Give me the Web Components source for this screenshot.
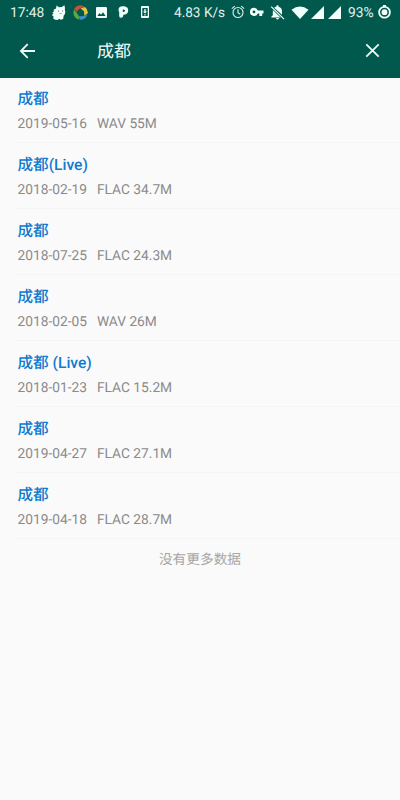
<!DOCTYPE html>
<html lang="zh-CN">
<head>
<meta charset="UTF-8">
<meta name="viewport" content="width=device-width, initial-scale=1">
<title>成都</title>
<style>
    body {
        margin: 0;
        background: #fafafa;
        font-family: Roboto, "Noto Sans CJK SC", sans-serif;
        text-rendering: geometricPrecision;
    }
</style>
</head>
<body>
<music-app></music-app>

<template id="status-bar-template">
    <style>
        :host {
            display: flex;
            align-items: center;
            justify-content: space-between;
            height: 24px;
            padding: 0 9px 0 10px;
            color: #e4f2ee;
            font-size: 13.8px;
            white-space: nowrap;
        }
        div {
            display: flex;
            align-items: center;
        }
        span {
            padding-top: 2px;
            line-height: 22px;
        }
        svg {
            display: block;
            flex: none;
            fill: #f2fffb;
        }
        .time { width: 41px; }
        .speed { width: 57px; font-size: 13.6px; }
        .battery { width: 30px; }
    </style>
    <div>
        <span class="time">17:48</span>
        <svg width="15" height="18" viewBox="0 0 15 18">
            <path d="M5 5.6 5.6 2.6 8 4.2 10.8 4 13.4 2.2Q14.2 4.6 13.8 6.6 14.8 9 13.8 11.2L12.6 12.8 12.2 16 9.6 16.8 8.4 15.8 6.4 17 4.2 16.8 2.2 15.6 2.6 13.4.8 12 2.6 10.6 1.2 9.6 3.4 8.2 2.2 7Z"/>
            <circle cx="7.6" cy="8" r=".6" fill="#286d60"/>
            <circle cx="11.6" cy="8" r=".6" fill="#286d60"/>
            <path d="M8.6 10.6h2.2" stroke="#4d897e" stroke-width=".7" fill="none"/>
        </svg>
        <svg width="15" height="15" viewBox="0 0 15 15" style="margin-left: 7px">
            <path fill="#c9503a" d="M1.1 4A7.2 7.2 0 0 1 8 .2L11.8 1.8 6.2 3.9 3.7 6.8Z"/>
            <path fill="#e4c43a" d="M7.6 3.4 12 1.9Q15.4 4.6 14.7 8.6L11.3 10.4 11 6.2Z"/>
            <path fill="#58a944" d="M.9 4.6 3.4 7.2 5.8 11 6.4 14.5Q.6 13.5.3 7.8Z"/>
            <path fill="#3d91ca" d="M5.9 11.2 9.2 11.3 14.5 9.4Q12.3 15 6.8 14.7Z"/>
        </svg>
        <svg width="11" height="11" viewBox="0 0 11 11" style="margin-left: 8px">
            <path fill-rule="evenodd" d="M1.1 0h8.8Q11 0 11 1.1v8.8Q11 11 9.9 11H1.1Q0 11 0 9.9V1.1Q0 0 1.1 0ZM1.4 9h8.2L7 5.3 5 7.8 3.5 6.1Z"/>
        </svg>
        <svg width="11" height="12" viewBox="0 0 11 12" style="margin-left: 11px">
            <path fill-rule="evenodd" d="M.5 4Q.5.3 4.6.3H6Q10.2.7 10.2 4.6 10 8.5 6 8.8H5.2V10Q5 11.8 3.2 11.8 1.2 11.8 1.2 9.9V6.1Q.5 5.2.5 4ZM4.8 3.4V6H5.8Q7 5.8 7 4.7 6.9 3.5 5.8 3.4Z"/>
        </svg>
        <svg width="8" height="12" viewBox="0 0 8 12" style="margin-left: 12px">
            <path fill-rule="evenodd" d="M1 0h6q1 0 1 1v10q0 1-1 1H1q-1 0-1-1V1q0-1 1-1ZM1.3 2v8h5.4V2Z"/>
            <path d="M3.3 2.9h1.4v2.7h1.4L4 7.6 1.9 5.6h1.4ZM3.3 8.2h1.4v1.2H3.3Z"/>
        </svg>
    </div>
    <div>
        <span class="speed">4.83 K/s</span>
        <svg width="14" height="14" viewBox="0 0 14 14">
            <g fill="none" stroke="#d9eee9" stroke-width="1.15">
                <circle cx="7" cy="7.5" r="5"/>
                <path d="M7 4.3v3.5l2.3 1.4M.8 3.6 3.8 1.1M10.2 1.1l3 2.5"/>
            </g>
        </svg>
        <svg width="14" height="10" viewBox="0 0 14 10" style="margin-left: 5px">
            <path fill-rule="evenodd" d="M4 .8A4.1 4.1 0 0 1 7.8 3.5H13.5V6.4H12.2V9H9.3V6.4H7.8A4.1 4.1 0 1 1 4 .8ZM4 3.5A1.4 1.4 0 1 0 4 6.3 1.4 1.4 0 0 0 4 3.5Z"/>
        </svg>
        <svg width="15" height="15" viewBox="0 0 15 15" style="margin-left: 6px">
            <path d="M4.2 2.7Q5.1 2 6.3 1.8V1.3Q6.4.3 7.5.3 8.6.3 8.7 1.3V1.8Q12 2.7 12 6.4V9.7ZM2.9 5.1 10.5 12.5H1.3V11.7L2.8 10.2ZM6 13.1H9Q8.7 14.6 7.5 14.6 6.3 14.6 6 13.1Z"/>
            <path d="M1.2 1.6 14 14.1" fill="none" stroke="#f2fffb" stroke-width="1.2"/>
        </svg>
        <svg width="18" height="13" viewBox="0 0 18 13" style="margin-left: 6px">
            <path d="M.5 3.7Q9-2.8 17.5 3.7L9 13Z"/>
        </svg>
        <svg width="13" height="13" viewBox="0 0 13 13" style="margin-left: 2px">
            <path d="M13 0V13H0Z"/>
        </svg>
        <svg width="13" height="13" viewBox="0 0 13 13" style="margin: 0 7px 0 4px">
            <path d="M13 0V13H0Z"/>
        </svg>
        <span class="battery">93%</span>
        <svg width="13" height="14" viewBox="0 0 13 14">
            <circle cx="6.5" cy="7.2" r="5.4" fill="none" stroke="#f2fffb" stroke-width="1.8"/>
            <circle cx="6.5" cy="7.2" r="2.9"/>
            <path d="M5 0h3v2H5z"/>
        </svg>
    </div>
</template>

<template id="title-bar-template">
    <style>
        :host {
            display: flex;
            align-items: center;
            height: 53.5px;
            padding: 0 20px 0 19px;
            color: #f2faf8;
        }
        h1 {
            flex: 1;
            margin: 0 0 0 61px;
            padding-top: 2px;
            font-size: 17px;
            font-weight: 400;
            line-height: 24px;
        }
        svg {
            display: block;
            fill: none;
            stroke: #f2faf8;
            stroke-width: 1.8;
        }
    </style>
    <svg width="17" height="16" viewBox="0 0 17 16"><path d="M16 8H2M8.7 1.2 1.9 8l6.8 6.8"/></svg>
    <h1><slot></slot></h1>
    <svg width="15" height="15" viewBox="0 0 15 15"><path d="m1.3 1.3 12.4 12.4m0-12.4L1.3 13.7"/></svg>
</template>

<template id="song-item-template">
    <style>
        :host {
            display: block;
            box-sizing: border-box;
            height: 65.93px;
            margin-left: 16px;
            padding: 10.6px 0 0 1.5px;
            border-bottom: 1px solid #f4f4f4;
        }
        .name {
            color: #0f7bd0;
            font-size: 15.6px;
            font-weight: 500;
            line-height: 22px;
        }
        .meta {
            display: flex;
            gap: 10px;
            margin-top: 4.2px;
            color: #8a8a8a;
            font-size: 13.75px;
            line-height: 20px;
        }
    </style>
    <div class="name"><slot></slot></div>
    <div class="meta"><span id="date"></span><span id="file"></span></div>
</template>

<template id="music-app-template">
    <style>
        :host { display: block; }
        header {
            height: 77.5px;
            background: #00594c;
        }
        footer {
            padding-top: 11px;
            color: #a6a6a6;
            font-size: 13.7px;
            line-height: 20px;
            text-align: center;
        }
    </style>
    <header>
        <status-bar></status-bar>
        <title-bar>成都</title-bar>
    </header>
    <main>
        <song-item date="2019-05-16" file="WAV 55M">成都</song-item>
        <song-item date="2018-02-19" file="FLAC 34.7M">成都(Live)</song-item>
        <song-item date="2018-07-25" file="FLAC 24.3M">成都</song-item>
        <song-item date="2018-02-05" file="WAV 26M">成都</song-item>
        <song-item date="2018-01-23" file="FLAC 15.2M">成都 (Live)</song-item>
        <song-item date="2019-04-27" file="FLAC 27.1M">成都</song-item>
        <song-item date="2019-04-18" file="FLAC 28.7M">成都</song-item>
    </main>
    <footer>没有更多数据</footer>
</template>

<script>
class BaseElement extends HTMLElement {
    constructor() {
        super();
        const template = document.getElementById(`${this.localName}-template`);
        this.attachShadow({ mode: "open" }).append(template.content.cloneNode(true));
    }
}

class StatusBar extends BaseElement {}
class TitleBar extends BaseElement {}
class MusicApp extends BaseElement {}

class SongItem extends BaseElement {
    static get observedAttributes() {
        return ["date", "file"];
    }

    attributeChangedCallback(name, oldVal, newVal) {
        this.shadowRoot.getElementById(name).textContent = newVal;
    }
}

customElements.define("status-bar", StatusBar);
customElements.define("title-bar", TitleBar);
customElements.define("song-item", SongItem);
customElements.define("music-app", MusicApp);
</script>
</body>
</html>
